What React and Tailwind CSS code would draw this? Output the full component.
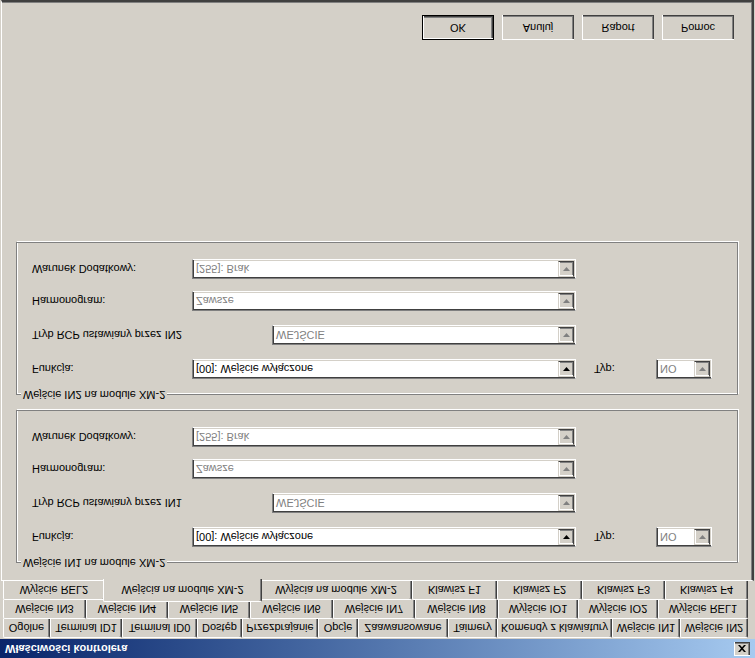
import React from "react";

const tabRows = [
  [
    ["Ogólne", 47],
    ["Terminal ID1", 72],
    ["Terminal ID0", 75],
    ["Dostęp", 45],
    ["Przezbrajanie", 76],
    ["Opcje", 40],
    ["Zaawansowane", 90],
    ["Taimery", 49],
    ["Komendy z klawiatury", 115],
    ["Wejście IN1", 68],
    ["Wejście IN2", 68],
  ],
  [
    ["Wejście IN3", 83],
    ["Wejście IN4", 82],
    ["Wejście IN5", 82],
    ["Wejście IN6", 83],
    ["Wejście IN7", 82],
    ["Wejście IN8", 83],
    ["Wyjście IO1", 80],
    ["Wyjście IO2", 80],
    ["Wyjście REL1", 90],
  ],
  [
    ["Wyjście REL2", 102],
    ["Wejścia na module XM-2", 155, true],
    ["Wyjścia na module XM-2", 152],
    ["Klawisz F1", 85],
    ["Klawisz F2", 85],
    ["Klawisz F3", 83],
    ["Klawisz F4", 83],
  ],
];


function Arrow({ enabled }) {
  return (
    <div className="ml-auto mr-[1px] w-[16px] h-[16px] flex items-center justify-center bg-[#d4d0c8] border-t border-l border-t-[#d4d0c8] border-l-[#d4d0c8] border-b border-r border-b-[#404040] border-r-[#404040] shadow-[inset_1px_1px_0_#fff,inset_-1px_-1px_0_#808080]">
      <svg width="7" height="4" viewBox="0 0 7 4">
        <path d="M0 0h7L3.5 4z" fill={enabled ? "#000" : "#808080"} />
      </svg>
    </div>
  );
}


function Combo({ value, width, enabled }) {
  return (
    <div
      style={{ width }}
      className="h-[20px] flex items-center bg-white border border-t-[#808080] border-l-[#808080] border-b-white border-r-white shadow-[inset_1px_1px_0_#404040,inset_-1px_-1px_0_#d4d0c8]"
    >
      <span
        className={`pl-[3px] whitespace-nowrap ${
          enabled ? "text-black" : "text-[#808080]"
        }`}
      >
        {value}
      </span>
      <Arrow enabled={enabled} />
    </div>
  );
}


function Group({ n }) {
  return (
    <div className="relative mx-[14px] h-[153px] border border-[#808080] shadow-[inset_1px_1px_0_#fff,1px_1px_0_#fff]">

      <span className="absolute left-[4px] -top-[8px] px-[2px] bg-[#d4d0c8] leading-[14px]">
        Wejście IN{n} na module XM-2
      </span>

      <div className="flex flex-col pl-[15px] pt-[15px]">

        <div className="flex items-center h-[20px]">
          <span className="w-[160px]">Funkcja:</span>
          <Combo value="[00]: Wejście wyłączone" width={384} enabled />
          <span className="ml-[18px] w-[62px]">Typ:</span>
          <Combo value="NO" width={56} />
        </div>

        <div className="flex items-center h-[20px] mt-[14px]">
          <span className="w-[240px] whitespace-nowrap">
            Tryb RCP ustawiany przez IN{n}
          </span>
          <Combo value="WEJŚCIE" width={304} />
        </div>

        <div className="flex items-center h-[20px] mt-[14px]">
          <span className="w-[160px]">Harmonogram:</span>
          <Combo value="Zawsze" width={384} />
        </div>

        <div className="flex items-center h-[20px] mt-[12px]">
          <span className="w-[160px]">Warunek Dodatkowy:</span>
          <Combo value="[255]: Brak" width={384} />
        </div>

      </div>
    </div>
  );
}


function Button({ label, def }) {
  return (
    <div
      className={`w-[72px] h-[25px] flex items-center justify-center bg-[#d4d0c8] ${
        def
          ? "border border-black shadow-[inset_1px_1px_0_#fff,inset_-1px_-1px_0_#404040,inset_-2px_-2px_0_#808080]"
          : "shadow-[inset_1px_1px_0_#fff,inset_-1px_-1px_0_#404040,inset_-2px_-2px_0_#808080]"
      }`}
    >
      {label}
    </div>
  );
}


export default function App() {
  return (
    <div className="w-[755px] h-[658px] overflow-hidden bg-[#d4d0c8] flex flex-col -scale-y-100 font-['Liberation_Sans',Arial,sans-serif] text-[11px] text-black">

      {/* TITLE */}
      <div className="h-[19px] shrink-0 flex items-start bg-gradient-to-r from-[#0a246a] to-[#a6caf0]">
        <span className="pl-[5px] pt-[3px] font-bold text-white leading-[13px]">
          Właściwości kontrolera
        </span>
        <div className="ml-auto mr-[5px] mt-[2px] w-[16px] h-[14px] flex items-center justify-center bg-[#d4d0c8] shadow-[inset_1px_1px_0_#fff,inset_-1px_-1px_0_#404040,inset_-2px_-2px_0_#808080]">
          <svg width="8" height="7" viewBox="0 0 8 7">
            <path d="M0 0h2l2 2.2L6 0h2L5 3.5 8 7H6L4 4.8 2 7H0l3-3.5z" fill="#000" />
          </svg>
        </div>
      </div>

      {/* TABS */}
      <div className="shrink-0 flex flex-col pl-[3px] pt-[1px]">
        {tabRows.map((row, i) => (
          <div key={i} className="flex h-[19px]">
            {row.map(([label, w, active]) => (
              <div
                key={label}
                style={{ width: active ? w + 4 : w }}
                className={`flex items-center justify-center whitespace-nowrap bg-[#d4d0c8] border-t border-l border-white rounded-t-[2px] border-r border-r-[#404040] shadow-[inset_-1px_0_0_#808080] ${
                  active
                    ? "relative z-10 -mx-[2px] -mt-[2px] h-[23px] self-start"
                    : "h-[19px]"
                }`}
              >
                {label}
              </div>
            ))}
          </div>
        ))}
      </div>

      {/* PANEL */}
      <div className="flex-1 flex flex-col ml-[1px] mr-[1px] border-t border-l border-white border-r-2 border-b-2 border-r-[#404040] border-b-[#404040] shadow-[inset_-1px_-1px_0_#808080]">

        <div className="mt-[17px]">
          <Group n={1} />
        </div>

        <div className="mt-[15px]">
          <Group n={2} />
        </div>

        <div className="flex-1" />

        <div className="flex justify-end gap-[8px] pr-[18px] pb-[13px]">
          <Button label="OK" def />
          <Button label="Anuluj" />
          <Button label="Raport" />
          <Button label="Pomoc" />
        </div>

      </div>

    </div>
  );
}
